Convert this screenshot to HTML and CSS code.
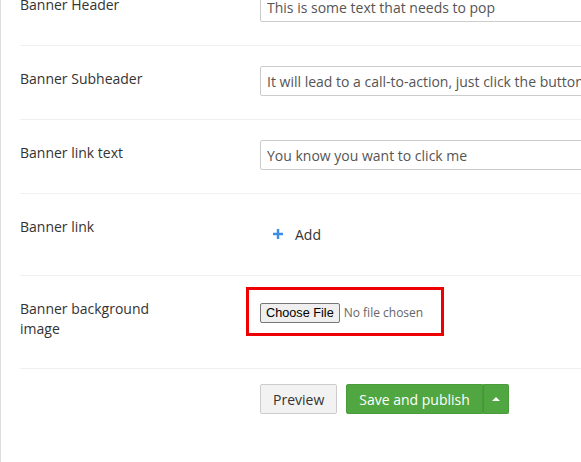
FILE: index.html
```html
<!DOCTYPE html>
<html lang="en">
<head>
    <meta charset="UTF-8">
    <meta name="viewport" content="width=device-width, initial-scale=1.0">
    <title>Banner Settings</title>
    <link rel="stylesheet" href="styles.css">
</head>
<body>
    <!-- Settings Panel -->
    <div class="panel">
        <form class="settings-form">
            <div class="form-row">
                <label class="form-label">Banner Header</label>
                <div class="form-field">
                    <input class="text-input" type="text" value="This is some text that needs to pop">
                </div>
            </div>

            <div class="form-row">
                <label class="form-label">Banner Subheader</label>
                <div class="form-field">
                    <input class="text-input" type="text" value="It will lead to a call-to-action, just click the button below">
                </div>
            </div>

            <div class="form-row">
                <label class="form-label">Banner link text</label>
                <div class="form-field">
                    <input class="text-input" type="text" value="You know you want to click me">
                </div>
            </div>

            <div class="form-row link-row">
                <label class="form-label">Banner link</label>
                <div class="form-field">
                    <button type="button" class="add-button">
                        <svg class="plus-icon" width="10" height="10" viewBox="0 0 10 10">
                            <path d="M5 0 V10 M0 5 H10" stroke="#3d8de6" stroke-width="2.4"/>
                        </svg>
                        Add
                    </button>
                </div>
            </div>

            <div class="form-row image-row">
                <label class="form-label">Banner background image</label>
                <div class="form-field">
                    <div class="highlight">
                        <input class="file-input" type="file">
                    </div>
                </div>
            </div>

            <!-- Actions -->
            <div class="form-row actions-row">
                <div></div>
                <div class="actions">
                    <button type="button" class="btn btn-default">Preview</button>
                    <div class="btn-group">
                        <button type="button" class="btn btn-success">Save and publish</button>
                        <button type="button" class="btn btn-success btn-caret"><span class="caret"></span></button>
                    </div>
                </div>
            </div>
        </form>
    </div>
</body>
</html>
```

FILE: styles.css
```css
/* Global Styles */
html, body {
    height: 100%;
}

body {
    margin: 0;
    font-family: 'Open Sans', 'Liberation Sans', sans-serif;
    font-size: 14px;
    color: #333333;
    background-color: #ffffff;
    overflow: hidden;
}

/* Panel */
.panel {
    display: flow-root;
    min-height: 100%;
    border-left: 1px solid #dddddd;
    padding-left: 19px;
}

.settings-form {
    margin-top: -29px;
}

.form-row {
    display: grid;
    grid-template-columns: 240px 420px;
    border-top: 1px solid #f0f0f0;
    padding: 20px 0 23px;
}

.form-label {
    max-width: 160px;
    padding-top: 3px;
    line-height: 20px;
}

/* Text inputs */
.text-input {
    box-sizing: border-box;
    width: 100%;
    height: 30px;
    padding: 0 6px;
    border: 1px solid #cccccc;
    border-radius: 2px;
    font-family: inherit;
    font-size: 14px;
    color: #555555;
}

/* Banner link */
.link-row {
    padding-bottom: 21px;
}

.add-button {
    display: flex;
    align-items: center;
    gap: 12px;
    height: 40px;
    padding: 0 0 0 13px;
    border: none;
    background: none;
    font-family: inherit;
    font-size: 14px;
    color: #333333;
}

/* Background image */
.image-row {
    padding-bottom: 21px;
}

.highlight {
    box-sizing: border-box;
    width: 198px;
    height: 49px;
    margin: -9px 0 11px -14px;
    padding: 12px 0 0 11px;
    border: 3px solid #ee0000;
}

.file-input {
    font-family: inherit;
    font-size: 12px;
    color: #666666;
}

.file-input::file-selector-button {
    height: 20px;
    padding: 0 5px;
    margin-right: 4px;
    border: 1px solid #767676;
    border-radius: 2px;
    background-color: #efefef;
    font-family: 'Liberation Sans', Arial, sans-serif;
    font-size: 12.7px;
    color: #000000;
}

/* Actions */
.actions-row {
    padding-top: 15px;
}

.actions {
    display: flex;
    gap: 9px;
}

.btn-group {
    display: flex;
}

.btn {
    box-sizing: border-box;
    height: 30px;
    padding: 0 12px;
    border-radius: 2px;
    font-family: inherit;
    font-size: 14px;
    white-space: nowrap;
}

.btn-default {
    background-color: #f2f2f2;
    border: 1px solid #cccccc;
    color: #333333;
}

.btn-success {
    background-color: #50a640;
    border: 1px solid #4a9c3b;
    color: #ffffff;
}

.btn-group .btn-success:first-child {
    border-radius: 2px 0 0 2px;
}

.btn-caret {
    width: 26px;
    padding: 0;
    border-left-color: #46953a;
    border-radius: 0 2px 2px 0;
    display: flex;
    align-items: center;
    justify-content: center;
}

.caret {
    width: 0;
    height: 0;
    border-left: 4px solid transparent;
    border-right: 4px solid transparent;
    border-bottom: 4px solid #ffffff;
}
```
